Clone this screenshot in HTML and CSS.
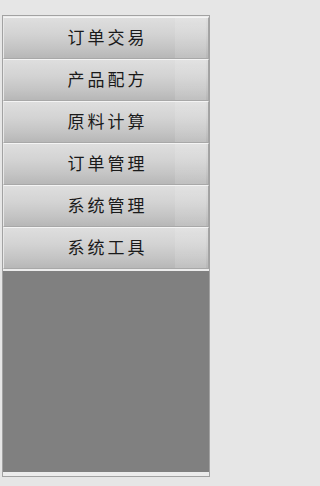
FILE: index.html
```html
<!DOCTYPE html>
<html lang="zh-CN">
<head>
<meta charset="utf-8">
<title>菜单</title>
<link rel="stylesheet" href="styles.css">
</head>
<body>
<div class="panel">
  <div class="menu">
    <div class="btn">订单交易</div>
    <div class="btn">产品配方</div>
    <div class="btn">原料计算</div>
    <div class="btn">订单管理</div>
    <div class="btn">系统管理</div>
    <div class="btn">系统工具</div>
  </div>
  <div class="content"></div>
</div>
</body>
</html>
```
FILE: styles.css
```css
html, body {
  margin: 0;
  padding: 0;
  background: #e6e6e6;
}
body {
  width: 216px;
  height: 486px;
  overflow: hidden;
  font-family: "Noto Sans CJK SC", "Noto Sans", sans-serif;
}
.panel {
  box-sizing: border-box;
  margin: 15px 0 0 2px;
  width: 208px;
  height: 462px;
  border: 1px solid #a2a2a2;
  background: #ececec;
  padding: 1px 0 4px 0;
  display: flex;
  flex-direction: column;
}
.menu {
  display: flex;
  flex-direction: column;
  border-bottom: 2px solid #ececec;
}
.btn {
  box-sizing: border-box;
  height: 42px;
  display: flex;
  align-items: center;
  justify-content: center;
  padding: 0 0 3px 3px;
  letter-spacing: 3px;
  font-size: 17px;
  color: #1a1a1a;
  border-top: 1px solid #f4f4f4;
  border-left: 1px solid #e8e8e8;
  border-right: 1px solid #a4a4a4;
  border-bottom: 1px solid #a8a8a8;
  background:
    linear-gradient(to right, rgba(255,255,255,0) 84%, rgba(255,255,255,0.12) 84%, rgba(255,255,255,0.12) 99%, rgba(255,255,255,0) 99%),
    linear-gradient(to bottom, #dedede 0%, #d3d3d3 40%, #c4c4c4 75%, #b7b7b7 100%);
}
.content {
  flex: 1;
  background: #808080;
}
```
